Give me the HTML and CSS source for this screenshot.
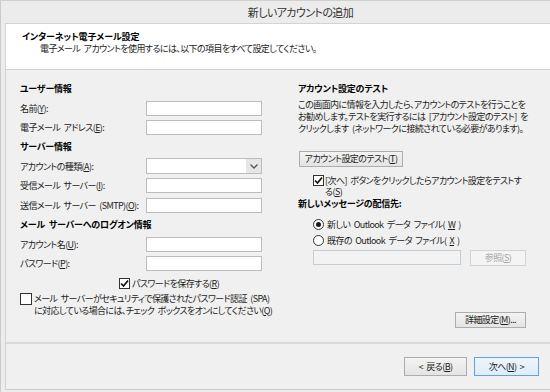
FILE: index.html
```html
<!DOCTYPE html>
<html lang="ja">
<head>
    <meta charset="UTF-8">
    <meta name="viewport" content="width=device-width, initial-scale=1.0">
    <title>新しいアカウントの追加</title>
    <link rel="stylesheet" href="styles.css">
</head>
<body>
<div class="window">
    <div class="titlebar">新しいアカウントの追加</div>
    <div class="frame">
        <div class="banner">
            <div class="bannerTitle">インターネット電子メール設定</div>
            <div class="bannerText">電子メール アカウントを使用するには、以下の項目をすべて設定してください。</div>
        </div>
        <div class="content">
            <div class="colLeft">
                <div class="group">ユーザー情報</div>
                <label for="name">名前(<u>Y</u>):</label>
                <input type="text" class="textbox" id="name">
                <label for="email">電子メール アドレス(<u>E</u>):</label>
                <input type="text" class="textbox" id="email">

                <div class="group">サーバー情報</div>
                <label for="accType">アカウントの種類(<u>A</u>):</label>
                <div class="combo" id="accType">
                    <span class="comboArrow">
                        <svg width="8" height="5" viewBox="0 0 8 5"><path d="M0.5 0.5 L4 4 L7.5 0.5" fill="none" stroke="#555" stroke-width="1.3"/></svg>
                    </span>
                </div>
                <label for="inServer">受信メール サーバー(<u>I</u>):</label>
                <input type="text" class="textbox" id="inServer">
                <label for="outServer">送信メール サーバー (SMTP)(<u>O</u>):</label>
                <input type="text" class="textbox" id="outServer">

                <div class="group">メール サーバーへのログオン情報</div>
                <label for="accName">アカウント名(<u>U</u>):</label>
                <input type="text" class="textbox" id="accName">
                <label for="password">パスワード(<u>P</u>):</label>
                <input type="password" class="textbox" id="password">

                <div class="savePw">
                    <span class="checkbox">
                        <svg width="9" height="9" viewBox="0 0 9 9"><path d="M1 4.5 L3.5 7 L8 1.5" fill="none" stroke="#111" stroke-width="1.7"/></svg>
                    </span>
                    <span>パスワードを保存する(<u>R</u>)</span>
                </div>

                <div class="spa">
                    <span class="checkbox"></span>
                    <span>メール サーバーがセキュリティで保護されたパスワード認証 (SPA)<br>に対応している場合には、チェック ボックスをオンにしてください(<u>Q</u>)</span>
                </div>
            </div>

            <div class="colRight">
                <div class="group">アカウント設定のテスト</div>
                <p class="testText">この画面内に情報を入力したら、アカウントのテストを行うことを<br>お勧めします。テストを実行するには [アカウント設定のテスト] を<br>クリックします (ネットワークに接続されている必要があります)。</p>
                <button class="btn testBtn">アカウント設定のテスト(<u>T</u>)</button>
                <div class="checkNext">
                    <span class="checkbox">
                        <svg width="9" height="9" viewBox="0 0 9 9"><path d="M1 4.5 L3.5 7 L8 1.5" fill="none" stroke="#111" stroke-width="1.7"/></svg>
                    </span>
                    <span>[次へ] ボタンをクリックしたらアカウント設定をテストす<br>る(<u>S</u>)</span>
                </div>
                <div class="deliverTitle">新しいメッセージの配信先:</div>
                <div class="radioRow firstRadio"><span class="radio on"></span>新しい Outlook データ ファイル(<u>W</u>)</div>
                <div class="radioRow"><span class="radio"></span>既存の Outlook データ ファイル(<u>X</u>)</div>
                <div class="fileRow">
                    <input type="text" class="textbox fileBox" disabled>
                    <button class="btn browseBtn" disabled>参照(<u>S</u>)</button>
                </div>
                <button class="btn moreBtn">詳細設定(<u>M</u>)...</button>
            </div>
        </div>
        <div class="footer">
            <button class="btn backBtn">&lt; 戻る(<u>B</u>)</button>
            <button class="btn nextBtn">次へ(<u>N</u>) &gt;</button>
        </div>
    </div>
</div>
</body>
</html>
```

FILE: styles.css
```css
*{
    margin: 0;
    padding: 0;
    box-sizing: border-box;
}
body{
    background-color: #ececec;
    font-family: "Noto Sans CJK JP", "Noto Sans", sans-serif;
    font-size: 9px;
    letter-spacing: -0.6px;
    word-spacing: 2px;
    font-feature-settings: "palt";
    color: #1c1c1c;
    white-space: nowrap;
}
.window{
    width: 550px;
    height: 392px;
    border-left: 1px solid #cbcbcb;
    border-top: 1px solid #d0d0d0;
    background-color: #ececec;
    overflow: hidden;
}
.titlebar{
    height: 22px;
    padding-left: 50px;
    text-align: center;
    font-size: 11px;
    letter-spacing: -0.6px;
    line-height: 22px;
    color: #333;
}
.frame{
    margin-left: 4px;
    height: 367px;
    border-left: 1px solid #d3d3d3;
    border-top: 1px solid #d3d3d3;
    border-bottom: 1px solid #cdcdcd;
    background-color: #f0f0f0;
    display: flex;
    flex-direction: column;
}
.banner{
    height: 46px;
    flex-shrink: 0;
    background-color: #fff;
    border-bottom: 1px solid #cfcfcf;
    padding: 7px 0 0 16px;
    line-height: 12px;
}
.bannerTitle{
    font-weight: bold;
    letter-spacing: -0.1px;
    color: #000;
}
.bannerText{
    padding-left: 18px;
}
.content{
    height: 272px;
    flex-shrink: 0;
    overflow: hidden;
    display: flex;
    padding: 9px 0 0 14px;
}
.colLeft{
    width: 278px;
    display: grid;
    grid-template-columns: 126px 116px;
    grid-auto-rows: 19.45px;
    align-items: center;
    align-content: start;
}
.group{
    grid-column: 1 / 3;
    font-weight: bold;
    letter-spacing: -0.2px;
    color: #000;
    line-height: 19.5px;
}
.textbox{
    height: 15px;
    width: 116px;
    border: 1px solid #bcbcbc;
    background-color: #fff;
    font: inherit;
    outline: none;
}
.combo{
    height: 16px;
    width: 116px;
    border: 1px solid #bcbcbc;
    background-color: #fff;
    display: flex;
    justify-content: flex-end;
}
.comboArrow{
    width: 15px;
    height: 14px;
    background-color: #e6e6e6;
    display: flex;
    align-items: center;
    justify-content: center;
}
.checkbox{
    width: 11px;
    height: 11px;
    border: 1px solid #333;
    background-color: #fff;
    display: inline-flex;
    align-items: center;
    justify-content: center;
    flex-shrink: 0;
}
.savePw{
    grid-column: 1 / 3;
    display: flex;
    align-items: center;
    gap: 2px;
    padding-left: 99px;
}
.spa{
    grid-column: 1 / 3;
    display: flex;
    align-items: flex-start;
    gap: 2px;
    margin-top: 4px;
    line-height: 11.5px;
}
.spa .checkbox{
    width: 12px;
    height: 12px;
}
.colRight{
    width: 228px;
    display: flex;
    flex-direction: column;
}
.testText{
    line-height: 12px;
}
.btn{
    height: 16px;
    border: 1px solid #adadad;
    background: linear-gradient(#f3f3f3, #e4e4e4);
    font: inherit;
    letter-spacing: inherit;
    word-spacing: inherit;
    color: #1c1c1c;
    line-height: 14px;
    padding: 0 2px;
    white-space: nowrap;
}
.testBtn{
    width: 104px;
    margin: 16px 0 0 1px;
}
.checkNext{
    display: flex;
    align-items: flex-start;
    gap: 1px;
    margin: 8px 0 0 15px;
    line-height: 11.5px;
}
.deliverTitle{
    font-weight: bold;
    letter-spacing: -0.2px;
    color: #000;
    line-height: 12px;
    margin-top: 0;
}
.radioRow{
    height: 16px;
    margin-left: 15px;
    display: flex;
    align-items: center;
    gap: 3px;
}
.firstRadio{
    margin-top: 7px;
}
.radio{
    width: 11px;
    height: 11px;
    border: 1px solid #333;
    border-radius: 50%;
    background-color: #fff;
    display: inline-flex;
    align-items: center;
    justify-content: center;
}
.radio.on::after{
    content: "";
    width: 5px;
    height: 5px;
    border-radius: 50%;
    background-color: #1a1a1a;
}
.fileRow{
    display: flex;
    margin: 1px 0 0 15px;
}
.fileBox{
    width: 148px;
    background-color: #f3f3f3;
    border-color: #c4ccd6;
}
.browseBtn{
    width: 56px;
    margin-left: 9px;
    background: #f4f4f4;
    border-color: #d3d3d3;
    color: #a3a3a3;
}
.moreBtn{
    width: 71px;
    align-self: flex-end;
    margin-top: 46px;
}
.footer{
    flex: 1;
    border-top: 2px solid #d9d9d9;
    display: flex;
    justify-content: flex-end;
    gap: 7px;
    padding: 13px 11px 0 0;
}
.backBtn,
.nextBtn{
    height: 19px;
    line-height: 17px;
}
.backBtn{
    width: 63px;
}
.nextBtn{
    width: 65px;
    border-color: #5fa3e3;
    background: linear-gradient(#eef5fc, #dfecf9);
}
```
